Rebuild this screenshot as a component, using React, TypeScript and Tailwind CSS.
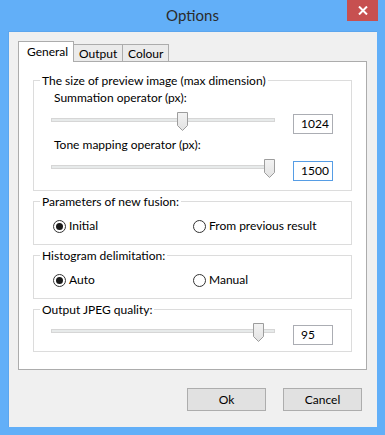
import clsx from 'clsx';

const font = "font-['Lato','Liberation_Sans',sans-serif]";

const Thumb = ({ left }: { left: number }) => (
  <svg
    className="absolute top-0"
    style={{ left }}
    width="11"
    height="19"
    viewBox="0 0 11 19"
  >
    <defs>
      <linearGradient id="tg" x1="0" x2="0" y1="0" y2="1">
        <stop offset="0" stopColor="#F3F3F3" />
        <stop offset="1" stopColor="#E2E2E2" />
      </linearGradient>
    </defs>
    <path d="M0.5 0.5 H10.5 V13.5 L5.5 18.5 L0.5 13.5 Z" fill="url(#tg)" stroke="#9D9D9D" />
  </svg>
);

const SliderRow = ({ thumb, value, focused }: { thumb: number; value: string; focused?: boolean }) => (
  <div className="flex h-[21px]">
    <div className="relative ml-[17px] w-[224px] h-[21px]">
      <div className="mt-[6px] h-[4px] bg-[#E7EAEA] border border-[#D6D6D6]" />
      <Thumb left={thumb} />
    </div>
    <div
      className={clsx(
        'ml-[18px] mt-[2px] w-[40px] h-[20px] bg-white border pl-[7px] text-[12px] leading-[18px] text-black',
        focused ? 'border-[#569DE5]' : 'border-[#ABADB3]'
      )}
    >
      {value}
    </div>
  </div>
);

const Radio = ({ label, checked }: { label: string; checked?: boolean }) => (
  <div className="flex items-center h-[14px]">
    <div className="w-[13px] h-[13px] rounded-full border border-[#333] bg-white flex items-center justify-center">
      {checked && <div className="w-[7px] h-[7px] rounded-full bg-[#1a1a1a]" />}
    </div>
    <span className="ml-[3px] text-[12px] leading-[14px] text-black">{label}</span>
  </div>
);

const Group = ({ title, children, className }: { title: string; children: React.ReactNode; className?: string }) => (
  <fieldset className={clsx('border border-[#DCDCDC] mx-[14px]', className)}>
    <legend className="ml-[6px] px-[2px] text-[12px] leading-[15px] text-black">{title}</legend>
    {children}
  </fieldset>
);

export default function App() {
  return (
    <div className={clsx('w-[385px] h-[435px] bg-[#62AFF8] flex flex-col', font)}>
      <div className="relative h-[31px] flex justify-center">
        <span className="mt-[5px] text-[15px] leading-[20px] text-[#2B2B2B]">Options</span>
        <div className="absolute right-[7px] top-0 w-[31px] h-[21px] bg-[#C75050] flex items-center justify-center">
          <svg width="10" height="9" viewBox="0 0 10 9">
            <path d="M1 0.5 L9 8.5 M9 0.5 L1 8.5" stroke="white" strokeWidth="2" />
          </svg>
        </div>
      </div>
      <div className="mx-[8px] h-[396px] bg-[#F0F0F0] border-l border-t border-[#5CA6EE] flex flex-col">
        <div className="flex items-end ml-[9px] mt-[9px] h-[21px] text-[12px] text-black">
          <div className="relative z-10 w-[56px] h-[21px] bg-white border border-b-0 border-[#ACACAC] pl-[8px] leading-[20px]">
            General
          </div>
          <div className="w-[49px] h-[18px] bg-[#EBEBEB] border border-l-0 border-[#ACACAC] pl-[5px] leading-[17px]">
            Output
          </div>
          <div className="w-[46px] h-[18px] bg-[#EBEBEB] border border-l-0 border-[#ACACAC] pl-[5px] leading-[17px]">
            Colour
          </div>
        </div>
        <div className="-mt-[1px] ml-[9px] w-[349px] h-[309px] bg-white border border-[#ACACAC] pt-[11px]">
          <Group title="The size of preview image (max dimension)" className="pb-[10px]">
            <div className="mt-[3px] pl-[20px] text-[12px] leading-[14px] text-black">Summation operator (px):</div>
            <div className="mt-[7px]">
              <SliderRow thumb={126} value="1024" />
            </div>
            <div className="mt-[5px] pl-[20px] text-[12px] leading-[14px] text-black">Tone mapping operator (px):</div>
            <div className="mt-[7px]">
              <SliderRow thumb={213} value="1500" focused />
            </div>
          </Group>
          <Group title="Parameters of new fusion:" className="mt-[3px] pb-[11px]">
            <div className="flex mt-[10px] pl-[19px]">
              <div className="w-[140px]">
                <Radio label="Initial" checked />
              </div>
              <Radio label="From previous result" />
            </div>
          </Group>
          <Group title="Histogram delimitation:" className="mt-[3px] pb-[11px]">
            <div className="flex mt-[10px] pl-[19px]">
              <div className="w-[140px]">
                <Radio label="Auto" checked />
              </div>
              <Radio label="Manual" />
            </div>
          </Group>
          <Group title="Output JPEG quality:" className="mt-[3px] pb-[7px]">
            <div className="mt-[6px]">
              <SliderRow thumb={202} value="95" />
            </div>
          </Group>
        </div>
        <div className="flex justify-end gap-[17px] mt-[18px] mr-[15px] text-[12px] text-black">
          <div className="w-[79px] h-[23px] bg-[#E1E1E1] border border-[#ADADAD] flex items-center justify-center">
            Ok
          </div>
          <div className="w-[79px] h-[23px] bg-[#E1E1E1] border border-[#ADADAD] flex items-center justify-center">
            Cancel
          </div>
        </div>
      </div>
    </div>
  );
}
